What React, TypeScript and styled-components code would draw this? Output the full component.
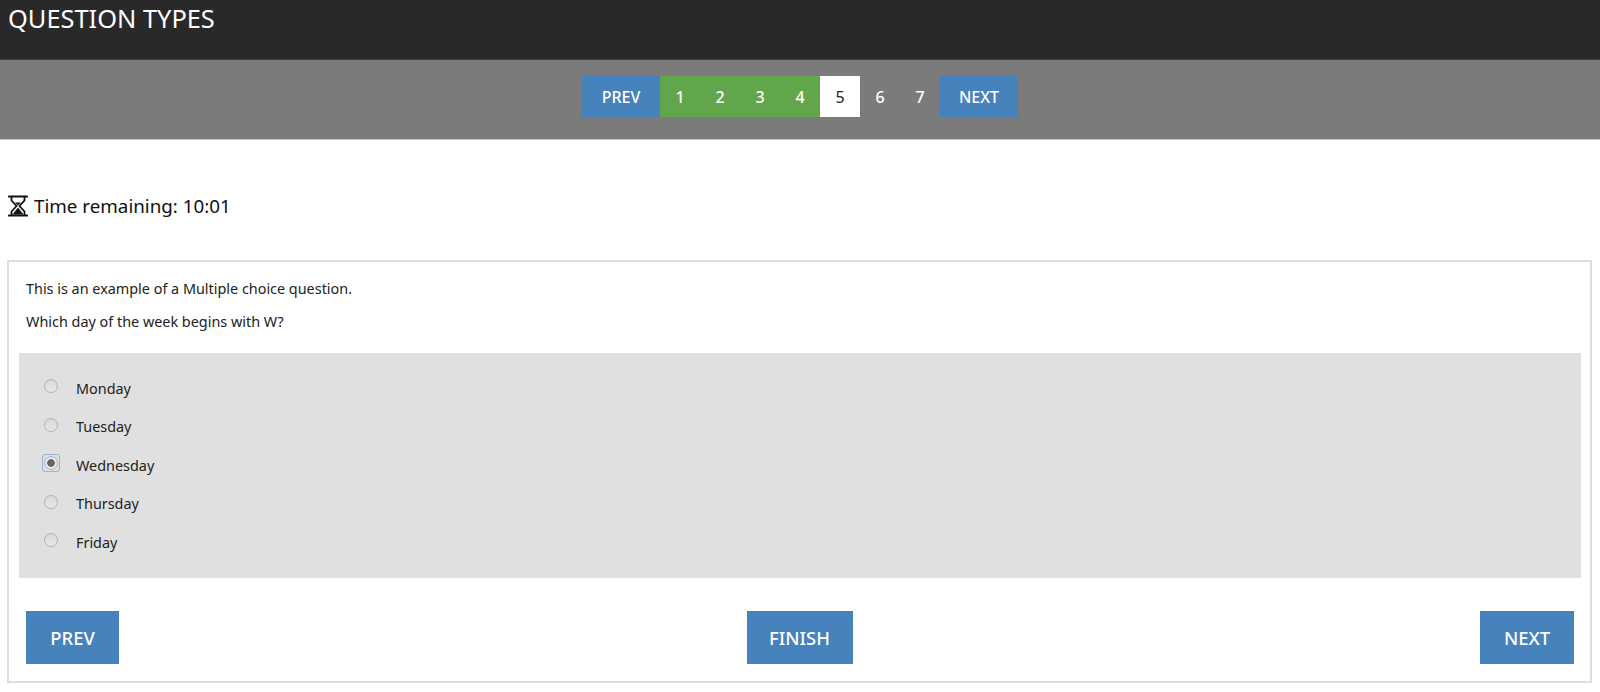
import React from "react";
import styled, { createGlobalStyle } from "styled-components";

const GlobalStyle = createGlobalStyle`
  html, body {
    margin: 0;
    padding: 0;
    background: #fff;
    font-family: "Noto Sans", "Open Sans", sans-serif;
    color: #222;
  }
`;

const BLUE = "#4682bb";

const Header = styled.header`
  height: 59px;
  background: #292929;
  border-bottom: 1px solid #3c3c3c;
  padding: 0 8px;
`;
const Title = styled.h1`
  margin: 0;
  font-size: 25.4px;
  line-height: 37px;
  font-weight: 400;
  color: #fff;
`;
const NavBand = styled.nav`
  height: 80px;
  background: #7b7b7b;
  border-bottom: 1px solid #c4c4c4;
  display: flex;
  justify-content: center;
  align-items: flex-start;
  padding-top: 16px;
  box-sizing: border-box;
`;
const NavItem = styled.a<{ $kind: "nav" | "done" | "current" | "todo" }>`
  display: flex;
  align-items: center;
  justify-content: center;
  height: 41px;
  width: ${(p) => (p.$kind === "nav" ? "78px" : "40px")};
  font-size: 16px;
  font-weight: ${(p) => (p.$kind === "current" ? 400 : 500)};
  color: ${(p) => (p.$kind === "current" ? "#222" : "#fff")};
  background: ${(p) =>
    p.$kind === "nav"
      ? BLUE
      : p.$kind === "done"
        ? "#62a64b"
        : p.$kind === "current"
          ? "#fff"
          : "transparent"};
`;
const Timer = styled.div`
  display: flex;
  align-items: center;
  gap: 6px;
  margin: 53px 0 0 8px;
  height: 26px;
  font-size: 18.8px;
  color: #111;
`;
const Panel = styled.section`
  margin: 41px 8px 0 7px;
  height: 423px;
  box-sizing: border-box;
  border: 2px solid #dedede;
  padding: 0 9px 0 10px;
  display: flex;
  flex-direction: column;
`;
const Question = styled.p`
  margin: 0 0 0 7px;
  font-size: 14.4px;
  line-height: 33px;
  &:first-child {
    margin-top: 10px;
  }
`;
const Options = styled.div`
  background: #e0e0e0;
  margin-top: 15px;
  height: 225px;
  padding: 16px 25px 0;
  box-sizing: border-box;
`;
const Option = styled.label`
  display: flex;
  height: 38.5px;
  align-items: center;
  gap: 18px;
  font-size: 14.4px;
`;
const Radio = styled.span<{ $checked?: boolean }>`
  position: relative;
  top: -2px;
  width: 14px;
  height: 14px;
  box-sizing: border-box;
  border-radius: 50%;
  border: 1px solid #b4b4b4;
  background: ${(p) =>
    p.$checked
      ? "radial-gradient(circle, #666 0 3.5px, #e8e8e8 4px)"
      : "linear-gradient(#d8d8d8, #e8e8e8)"};
  &::before {
    content: "";
    display: ${(p) => (p.$checked ? "block" : "none")};
    position: absolute;
    inset: -3px;
    border: 1.5px solid #8fb4ee;
    border-radius: 3px;
  }
`;
const Footer = styled.div`
  display: flex;
  justify-content: space-between;
  margin-top: 33px;
  padding: 0 7px;
`;
const ActionButton = styled.button<{ $width: number }>`
  width: ${(p) => p.$width}px;
  height: 53px;
  border: none;
  padding: 0;
  background: ${BLUE};
  color: #fff;
  font-family: inherit;
  font-size: 18.4px;
  font-weight: 500;
`;

function Hourglass() {
  return (
    <svg width="20" height="22" viewBox="0 0 20 22">
      <path d="M1 1.5h18M1 20.5h18" stroke="#111" strokeWidth="2.2" strokeLinecap="round" fill="none" />
      <path
        d="M3.5 2v3.5L8.5 11l-5 5.5V20M16.5 2v3.5L11.5 11l5 5.5V20"
        stroke="#111"
        strokeWidth="1.8"
        fill="none"
      />
      <path d="M10 12.5L15.5 19.5H4.5Z" fill="#111" />
      <path d="M7 7.5h6L10 10.5Z" fill="#111" />
    </svg>
  );
}

const days = ["Monday", "Tuesday", "Wednesday", "Thursday", "Friday"];

export default function App() {
  return (
    <>
      <GlobalStyle />
      <Header>
        <Title>QUESTION TYPES</Title>
      </Header>
      <NavBand>
        <NavItem $kind="nav">PREV</NavItem>
        {[1, 2, 3, 4, 5, 6, 7].map((n) => (
          <NavItem
            key={n}
            $kind={n < 5 ? "done" : n === 5 ? "current" : "todo"}
          >
            {n}
          </NavItem>
        ))}
        <NavItem $kind="nav">NEXT</NavItem>
      </NavBand>
      <Timer>
        <Hourglass />
        Time remaining: 10:01
      </Timer>
      <Panel>
        <Question>This is an example of a Multiple choice question.</Question>
        <Question>Which day of the week begins with W?</Question>
        <Options>
          {days.map((day) => (
            <Option key={day}>
              <Radio $checked={day === "Wednesday"} />
              {day}
            </Option>
          ))}
        </Options>
        <Footer>
          <ActionButton $width={93}>PREV</ActionButton>
          <ActionButton $width={106}>FINISH</ActionButton>
          <ActionButton $width={94}>NEXT</ActionButton>
        </Footer>
      </Panel>
    </>
  );
}
